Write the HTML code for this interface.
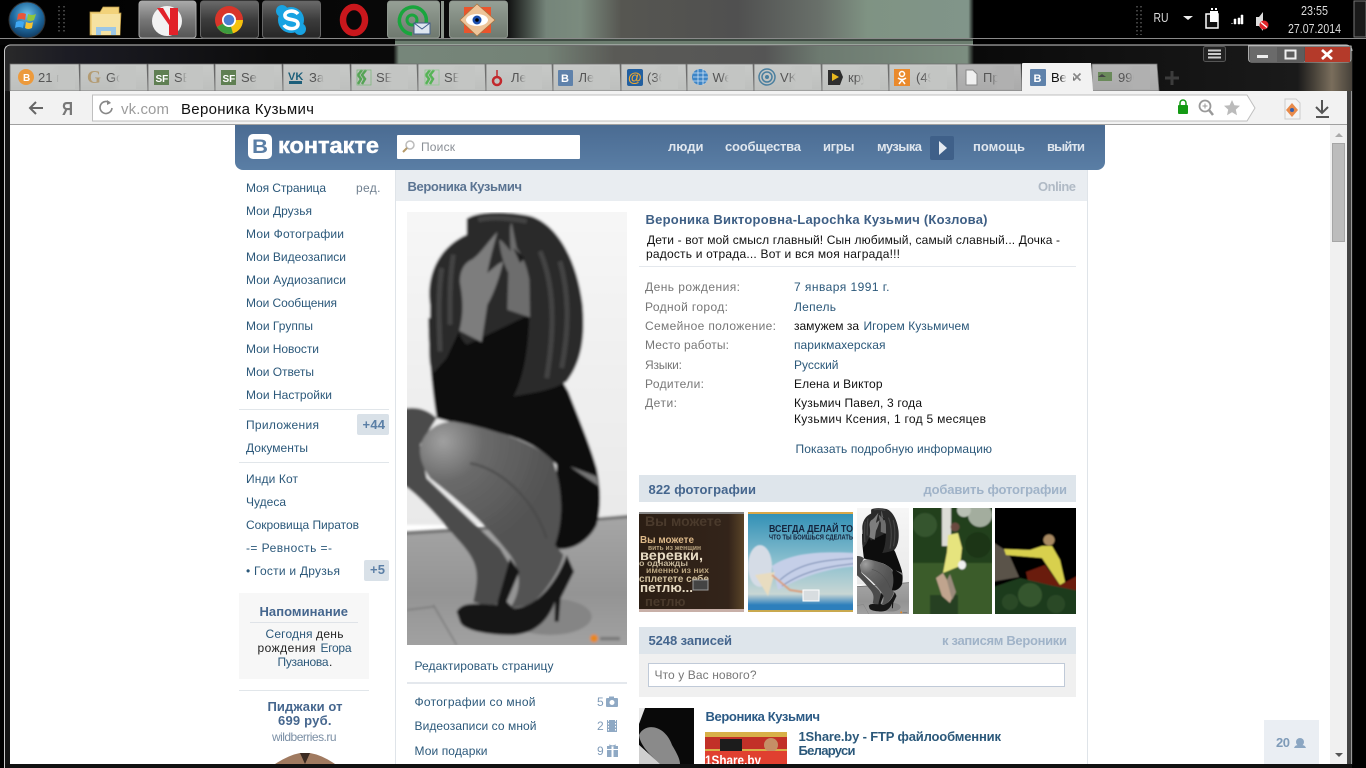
<!DOCTYPE html>
<html lang="ru"><head><meta charset="utf-8"><title>Вероника Кузьмич</title>
<style>
html,body{margin:0;padding:0;background:#000;width:1366px;height:768px;overflow:hidden}
svg{display:block}
text{font-family:"Liberation Sans","Noto Sans CJK SC",sans-serif;font-size:12px;fill:#2b587a}
.b{font-weight:bold;font-size:13px}
.g{fill:#777}.k{fill:#111}
.w{fill:#dfe6ee;font-weight:bold;font-size:13px}
.t{fill:#555;font-size:13px}
</style></head><body>
<svg width="1366" height="768" viewBox="0 0 1366 768" xmlns="http://www.w3.org/2000/svg">
<defs>
<filter id="s3" x="-10%" y="-10%" width="120%" height="120%"><feGaussianBlur stdDeviation="4"/></filter>
<filter id="s1" x="-5%" y="-5%" width="110%" height="110%"><feGaussianBlur stdDeviation=".7"/></filter>
<linearGradient id="wp" x1="0" x2="1366" y1="0" y2="0" gradientUnits="userSpaceOnUse">
<stop offset="0" stop-color="#000"/><stop offset=".37" stop-color="#0b0b0b"/><stop offset=".40" stop-color="#75857a"/><stop offset=".425" stop-color="#7b8b7e"/><stop offset=".455" stop-color="#565651"/><stop offset=".54" stop-color="#505050"/><stop offset=".6" stop-color="#69706a"/><stop offset=".635" stop-color="#7f9383"/><stop offset=".709" stop-color="#81958a"/><stop offset=".713" stop-color="#000"/><stop offset="1" stop-color="#000"/>
</linearGradient>
<linearGradient id="tb" x1="0" x2="1366" y1="0" y2="0" gradientUnits="userSpaceOnUse">
<stop offset="0" stop-color="#2a2a2a"/><stop offset=".05" stop-color="#1c1c24"/><stop offset=".2" stop-color="#0c0c0c"/><stop offset=".288" stop-color="#0a0a0a"/><stop offset=".292" stop-color="#76867a"/><stop offset=".4" stop-color="#748276"/><stop offset=".45" stop-color="#5a5a56"/><stop offset=".56" stop-color="#555"/><stop offset=".6" stop-color="#6d7a70"/><stop offset=".708" stop-color="#7c8e80"/><stop offset=".713" stop-color="#0a0a0a"/><stop offset=".95" stop-color="#1a1a1a"/><stop offset=".975" stop-color="#7a6e5c"/><stop offset="1" stop-color="#222"/>
</linearGradient>
<linearGradient id="btn" x1="0" x2="0" y1="0" y2="1"><stop offset="0" stop-color="#6a6a6a"/><stop offset=".5" stop-color="#3c3c3c"/><stop offset="1" stop-color="#262626"/></linearGradient>
<linearGradient id="btn2" x1="0" x2="0" y1="0" y2="1"><stop offset="0" stop-color="#aaa"/><stop offset=".5" stop-color="#777"/><stop offset="1" stop-color="#555"/></linearGradient>
<linearGradient id="btn3" x1="0" x2="0" y1="0" y2="1"><stop offset="0" stop-color="#96a096"/><stop offset="1" stop-color="#6e786e"/></linearGradient>
<linearGradient id="tab" x1="0" x2="0" y1="0" y2="1"><stop offset="0" stop-color="#c8cac8"/><stop offset="1" stop-color="#bdbfbd"/></linearGradient>
<linearGradient id="tabd" x1="0" x2="0" y1="0" y2="1"><stop offset="0" stop-color="#b6b6b6"/><stop offset="1" stop-color="#aaa"/></linearGradient>
<linearGradient id="fa"><stop offset="0" stop-color="#c3c5c3" stop-opacity="0"/><stop offset=".33" stop-color="#c3c5c3"/><stop offset="1" stop-color="#c3c5c3"/></linearGradient>
<linearGradient id="fd"><stop offset="0" stop-color="#b0b0b0" stop-opacity="0"/><stop offset=".33" stop-color="#b0b0b0"/><stop offset="1" stop-color="#b0b0b0"/></linearGradient>
<linearGradient id="fw"><stop offset="0" stop-color="#f2f2f2" stop-opacity="0"/><stop offset=".5" stop-color="#f2f2f2"/><stop offset="1" stop-color="#f2f2f2"/></linearGradient>
<linearGradient id="hd" x1="0" x2="0" y1="0" y2="1"><stop offset="0" stop-color="#4a6b92"/><stop offset="1" stop-color="#5a7ea5"/></linearGradient>
<radialGradient id="orb" cx=".5" cy=".35" r=".7"><stop offset="0" stop-color="#6fc0e8"/><stop offset=".55" stop-color="#1f6aa0"/><stop offset="1" stop-color="#0c2f52"/></radialGradient>
<linearGradient id="wall" x1="0" x2="0" y1="0" y2="1"><stop offset="0" stop-color="#f7f7f7"/><stop offset="1" stop-color="#e9e9e9"/></linearGradient>
<linearGradient id="floor" x1="0" x2="0" y1="0" y2="1"><stop offset="0" stop-color="#a6a6a6"/><stop offset=".5" stop-color="#949494"/><stop offset="1" stop-color="#a8a8a8"/></linearGradient>
<radialGradient id="knee" gradientUnits="userSpaceOnUse" cx="130" cy="710" r="340"><stop offset="0" stop-color="#a0a0a0"/><stop offset=".35" stop-color="#6a6a6a"/><stop offset="1" stop-color="#525252"/></radialGradient>
<linearGradient id="sky" x1="0" x2="0" y1="0" y2="1"><stop offset="0" stop-color="#2f8fb5"/><stop offset=".5" stop-color="#8cc0cf"/><stop offset=".82" stop-color="#c8d6d4"/><stop offset=".93" stop-color="#2d7fbc"/><stop offset="1" stop-color="#2d7fbc"/></linearGradient>
<linearGradient id="bark" x1="0" x2="1" y1="0" y2="0"><stop offset="0" stop-color="#2b1e14"/><stop offset=".85" stop-color="#33241a"/><stop offset="1" stop-color="#5a4428"/></linearGradient>
<clipPath id="cT1"><rect x="639" y="512" width="105" height="100"/></clipPath>
<clipPath id="cT2"><rect x="748" y="512" width="105" height="100"/></clipPath>
<clipPath id="cT4"><rect x="913" y="508" width="79" height="106"/></clipPath>
<clipPath id="cT5"><rect x="995" y="508" width="81" height="106"/></clipPath>
<clipPath id="cAv"><rect x="639" y="708" width="55" height="56"/></clipPath>
<clipPath id="cShare"><rect x="705" y="732" width="82" height="32"/></clipPath>
<clipPath id="cP"><rect x="21" y="22" width="660" height="1298"/></clipPath>
<symbol id="woman" viewBox="21 22 660 1298" preserveAspectRatio="none" overflow="hidden">
<g clip-path="url(#cP)">
<g filter="url(#s3)">
<rect x="-40" y="-40" width="780" height="1000" fill="url(#wall)"/>
<path d="M-40,988 L300,968 L740,930 L740,1400 L-40,1400 Z" fill="url(#floor)"/>
<path d="M-40,988 L300,968 L740,930" stroke="#707070" stroke-width="10" fill="none"/>
<path d="M100,1200 L170,1320 M21,1215 L100,1205" stroke="#666" stroke-width="3" fill="none"/>
<ellipse cx="450" cy="1235" rx="125" ry="55" fill="#858585"/>
<path d="M85,340 L178,340 L390,300 C430,420 480,520 505,560 C540,650 570,720 590,790 C602,850 605,900 590,960 C560,1020 500,1040 465,1030 L470,780 C380,680 250,680 110,640 C100,580 85,450 85,340 Z" fill="#090909"/>
<path d="M200,42 C240,15 340,22 395,35 C470,60 530,160 548,300 C556,400 545,470 500,530 C450,560 390,565 340,575 C370,520 385,440 388,330 L200,420 C180,400 178,385 178,378 L140,460 L100,505 C78,480 92,380 90,300 C78,220 110,130 200,90 Z" fill="#2b2b2b"/>
<path d="M420,140 C455,220 470,340 440,520 M480,170 C505,260 510,360 485,490 M125,190 C112,280 118,360 120,440 M160,150 C148,230 150,280 150,360 M235,45 C280,35 330,40 380,50" stroke="#454545" stroke-width="14" fill="none"/>
<path d="M178,378 L245,412 L262,300 C285,260 300,210 310,170 L295,178 L262,205 C270,160 285,110 292,82 C265,110 240,150 215,165 C190,175 178,205 180,235 C190,290 190,330 178,378 Z" fill="#7d7d7d"/>
<path d="M298,105 C300,130 305,165 325,205 L322,315 L390,338 L388,225 C380,180 365,150 350,130 L335,55 C328,60 330,90 332,140 C320,125 305,105 298,105 Z" fill="#6d6d6d"/>
<path d="M340,130 L375,160 L360,175 Z" fill="#1c1c1c"/>
<path d="M21,610 C60,605 90,620 110,640 L60,720 L80,820 L300,1030 L330,1080 C320,1120 300,1190 280,1210 L220,1190 C240,1100 235,1070 170,1000 C100,920 50,860 -20,820 L-20,610 Z" fill="#4c4c4c"/>
<path d="M60,730 C70,680 110,650 160,650 C280,670 420,720 460,770 C490,860 490,950 465,1020 L490,1050 C480,1100 430,1170 390,1200 L330,1210 C370,1150 360,1090 330,1050 C260,960 180,890 90,820 C70,790 58,760 60,730 Z" fill="url(#knee)"/>
<path d="M210,775 C300,790 400,880 440,1000" stroke="#484848" stroke-width="6" fill="none"/>
<path d="M510,785 L590,815 L598,845 Z" fill="#777"/>
<path d="M170,1220 C190,1185 240,1200 290,1200 L330,1060 L358,1100 L320,1190 L340,1210 C420,1210 480,1110 500,1050 L522,1100 L482,1180 L476,1250 L464,1250 L465,1190 C440,1260 390,1290 330,1290 C280,1290 190,1280 180,1250 Z" fill="#141414"/>
<circle cx="582" cy="1300" r="12" fill="#e8871e"/><rect x="600" y="1296" width="60" height="10" fill="#777"/>
</g>
</g>
</symbol>
</defs>

<!-- desktop -->
<rect width="1366" height="768" fill="#000"/>
<rect x="395" y="38" width="578" height="8" fill="#7f9383" opacity=".85"/>
<!-- taskbar -->
<rect width="1366" height="38" fill="url(#wp)"/>
<rect y="38" width="1366" height="1" fill="#8a8a8a"/>
<rect y="39" width="395" height="6" fill="#050505"/>
<rect x="395" y="39" width="578" height="2" fill="#3e4a42"/>
<rect x="973" y="39" width="393" height="6" fill="#000"/>

<circle cx="27" cy="20" r="18" fill="url(#orb)" stroke="#333"/>
<path d="M18,14 q4,-2 8,0 l-1,6 q-4,-2 -8,0 z" fill="#e9563a"/>
<path d="M28,14 q4,2 8,0 l-2,6 q-4,2 -7,0 z" fill="#8ec63f"/>
<path d="M16,22 q4,-2 8,0 l-1,6 q-4,-2 -8,0 z" fill="#3fa9f5"/>
<path d="M26,22 q4,2 7,0 l-1,6 q-4,2 -7,0 z" fill="#f7c331"/>
<path d="M59,6 V33 M64,6 V33" stroke="#555" stroke-width="1.5" stroke-dasharray="1.5 2.5"/>
<!-- folder -->
<path d="M90,12 h10 l3,-5 h16 v6 h2 l-1,22 h-30 z" fill="#f2d27a" stroke="#b79544" stroke-width=".7"/>
<rect x="92" y="14" width="28" height="21" fill="#f6e2a2"/>
<path d="M96,35 v-8 h20 v8 h-5 v-4 h-10 v4 z" fill="#9cc7e6"/>
<!-- buttons -->
<rect x="139" y="1" width="57" height="37" rx="3" fill="url(#btn2)" stroke="#aaa"/>
<circle cx="167" cy="21" r="15" fill="#f2f2f2"/>
<path d="M157,8 L163,8 L170,20 L170,8 L178,8 L178,35 L169,35 L169,25 Z" fill="#e2222a"/>
<rect x="200.500" y="1" width="58" height="37" rx="3" fill="url(#btn)" stroke="#666"/>
<circle cx="229" cy="20" r="14" fill="#d9352a"/>
<path d="M229,20 L217,27 A14,14 0 0 0 229,34 A14,14 0 0 0 243,20 Z" fill="#f4c20d"/>
<path d="M229,20 L217,27 A14,14 0 0 0 233,33.500 Z" fill="#3c9b3e"/>
<circle cx="229" cy="20" r="7" fill="#fff"/><circle cx="229" cy="20" r="5.300" fill="#4a7fd0"/>
<rect x="262.500" y="1" width="58" height="37" rx="3" fill="url(#btn)" stroke="#666"/>
<circle cx="291" cy="20" r="13" fill="#18a3e2"/><circle cx="282" cy="11" r="6" fill="#18a3e2"/><circle cx="300" cy="29" r="6" fill="#18a3e2"/>
<path d="M298,14 C294,9 284,11 285,16 C286,21 298,18 298,24 C298,30 287,30 284,25" stroke="#fff" stroke-width="3.600" fill="none"/>
<ellipse cx="354" cy="20" rx="11" ry="13" fill="none" stroke="#c9171c" stroke-width="6.500"/>
<rect x="387.500" y="1" width="52" height="37" rx="3" fill="url(#btn3)" stroke="#8e968e"/>
<path d="M412,34 a13.500,13.500 0 1 1 8,-2" fill="none" stroke="#19a53d" stroke-width="3.500"/>
<circle cx="412" cy="20" r="5" fill="none" stroke="#19a53d" stroke-width="3"/>
<rect x="414" y="23" width="16" height="11" fill="#dde6f0" stroke="#44608a"/><path d="M414,23 L422,29 L430,23" fill="none" stroke="#44608a"/>
<rect x="441" y="1" width="3" height="37" fill="#8d968d"/>
<rect x="449.500" y="1" width="58" height="37" rx="3" fill="url(#btn3)" stroke="#8e968e"/>
<rect x="464" y="7" width="27" height="26" fill="#e9552d"/>
<path d="M477,4 L495,20 L477,36 L460,20 Z" fill="#eec59a" stroke="#a9733f" stroke-width=".7"/>
<ellipse cx="477" cy="20" rx="11" ry="6" fill="#fff"/><circle cx="477" cy="20" r="4.500" fill="#1c4fae"/><circle cx="477" cy="20" r="1.800" fill="#000"/>
<!-- tray -->
<path d="M1137,6 V35 M1141,6 V35" stroke="#555" stroke-width="1.500" stroke-dasharray="1.500 2.500"/>
<text x="1153.500" y="22" style="fill:#ddd;font-size:13px" textLength="15" lengthAdjust="spacingAndGlyphs">RU</text>
<path d="M1183,16 h10 l-5,4 z" fill="#eee"/>
<path d="M1206,14 h12 v14 h-12 z" fill="#111" stroke="#fff" stroke-width="1.500"/><path d="M1210,11 h8 v11 h-8 z" fill="#fff"/><path d="M1212,10 v-2 M1216,10 v-2" stroke="#fff" stroke-width="2"/>
<path d="M1231,23.500 h2 M1234,21 v3 h2 v-5 h-2 z M1238,18 h2 v6 h-2 z M1241,15 h2 v9 h-2 z" fill="#fff" stroke="#fff" stroke-width=".5"/>
<path d="M1256,17 h3 l4,-5 v19 l-4,-5 h-3 z" fill="#ddd"/><circle cx="1264" cy="25" r="4.500" fill="#e0242a"/><path d="M1261,22.500 L1267,27.500" stroke="#fff" stroke-width="1.200"/>
<text x="1301" y="15" style="fill:#ddd;font-size:13px" textLength="27" lengthAdjust="spacingAndGlyphs">23:55</text>
<text x="1288" y="33" style="fill:#ddd;font-size:13px" textLength="53" lengthAdjust="spacingAndGlyphs">27.07.2014</text>
<rect x="1354" y="1" width="12" height="36" fill="#1a1a1a" stroke="#777"/>

<!-- window frame -->
<rect x="4" y="45" width="1349" height="723" rx="6" fill="#141414"/>
<rect x="5" y="46" width="1347" height="45" fill="url(#tb)"/>
<path d="M4.500,768 V51 a6,6 0 0 1 6,-6 H1346 a6,6 0 0 1 6,6" fill="none" stroke="#c9c9c9"/>
<rect x="1347" y="91" width="5" height="673" fill="#444"/>
<rect x="1351" y="91" width="1" height="677" fill="#999"/>
<rect x="5" y="764" width="1347" height="4" fill="#111"/>
<!-- title buttons -->
<rect x="1203.500" y="46.500" width="22" height="15" rx="2" fill="#222" stroke="#555"/>
<path d="M1208,50.500 h13 M1208,54 h13 M1208,57.500 h13" stroke="#ccc" stroke-width="2"/>
<path d="M1248.500,46 V59 a3,3 0 0 0 3,3 H1348 a3,3 0 0 0 3,-3 V46 Z" fill="#555" stroke="#aaa"/>
<rect x="1250" y="47" width="27" height="15" fill="#6a6a6a"/>
<rect x="1277" y="47" width="27" height="15" fill="#5d5d5d"/>
<rect x="1305" y="47" width="45" height="15" fill="#b43a2a"/>
<rect x="1257" y="55" width="11" height="3" fill="#eee"/>
<rect x="1285.500" y="50.500" width="10" height="8" fill="none" stroke="#eee" stroke-width="2"/>
<path d="M1322,50 L1332,59 M1332,50 L1322,59" stroke="#fff" stroke-width="2.800"/>

<!-- tabs -->
<g stroke="#6e6e6e" stroke-width=".8">
<path d="M10,91 V64 H79 L80,91Z" fill="url(#tab)"/>
<path d="M80,91 V64 H147 L148,91Z" fill="url(#tab)"/>
<path d="M148,91 V64 H214 L215,91Z" fill="url(#tab)"/>
<path d="M215,91 V64 H282 L283,91Z" fill="url(#tab)"/>
<path d="M283,91 V64 H350 L351,91Z" fill="url(#tab)"/>
<path d="M351,91 V64 H417 L418,91Z" fill="url(#tab)"/>
<path d="M418,91 V64 H485 L486,91Z" fill="url(#tab)"/>
<path d="M486,91 V64 H552 L553,91Z" fill="url(#tab)"/>
<path d="M553,91 V64 H620 L621,91Z" fill="url(#tab)"/>
<path d="M621,91 V64 H686 L687,91Z" fill="url(#tab)"/>
<path d="M687,91 V64 H753 L754,91Z" fill="url(#tab)"/>
<path d="M754,91 V64 H821 L822,91Z" fill="url(#tab)"/>
<path d="M822,91 V64 H888 L889,91Z" fill="url(#tab)"/>
<path d="M889,91 V64 H956 L957,91Z" fill="url(#tab)"/>
<path d="M957,91 V64 H1021 L1022,91Z" fill="url(#tabd)"/>
<path d="M1092,91 V64 H1157 L1159,91Z" fill="url(#tabd)"/>
</g>
<path d="M1022,91 V64 Q1022,63 1023,63 H1091 L1093,91Z" fill="#f2f2f2"/>
<path d="M1172,71 v14 M1165,78 h14" stroke="#3c3c3c" stroke-width="3"/>
<!-- favicons and tab titles -->
<circle cx="26" cy="77" r="8" fill="#ec9a3c"/><text x="23" y="81" style="fill:#fff;font-size:10px;font-weight:bold">B</text>
<text x="38" y="82" class="t">21 г</text><rect x="51" y="66" width="24" height="23" fill="url(#fa)"/>
<text x="87" y="83" style="fill:#b39b72;font-family:'Liberation Serif',serif;font-size:18px;font-weight:bold">G</text>
<text x="106" y="82" class="t">Go</text><rect x="112" y="66" width="24" height="23" fill="url(#fa)"/>
<rect x="154" y="70" width="15" height="15" fill="#5f7f52"/><text x="155.500" y="82" style="fill:#fff;font-size:10px;font-weight:bold">SF</text>
<text x="174" y="82" class="t">SEO</text><rect x="179" y="66" width="24" height="23" fill="url(#fa)"/>
<rect x="221" y="70" width="15" height="15" fill="#5f7f52"/><text x="222.500" y="82" style="fill:#fff;font-size:10px;font-weight:bold">SF</text>
<text x="241" y="82" class="t">Sec</text><rect x="250" y="66" width="24" height="23" fill="url(#fa)"/>
<text x="288" y="80" style="fill:#1d5f7a;font-size:11px;font-weight:bold">VK</text><rect x="289" y="81" width="13" height="3" fill="#1d5f7a"/>
<text x="309" y="82" class="t">За</text><rect x="316" y="66" width="24" height="23" fill="url(#fa)"/>
<path d="M362,70 l-4,5 3,4 -3,5 M366,70 l-4,5 3,4 -3,5" stroke="#56a456" stroke-width="2.500" fill="none"/><rect x="357" y="70" width="14" height="15" fill="none" stroke="#7fb87f" stroke-width=".8"/>
<text x="376" y="82" class="t">SEO</text><rect x="384" y="66" width="24" height="23" fill="url(#fa)"/>
<path d="M430,70 l-4,5 3,4 -3,5 M434,70 l-4,5 3,4 -3,5" stroke="#56b456" stroke-width="2.500" fill="none"/><rect x="425" y="70" width="14" height="15" fill="none" stroke="#8fc88f" stroke-width=".8"/>
<text x="444" y="82" class="t">SEO</text><rect x="451" y="66" width="24" height="23" fill="url(#fa)"/>
<path d="M497,70 v8" stroke="#c2282c" stroke-width="1.500"/><circle cx="497" cy="81" r="4" fill="none" stroke="#c2282c" stroke-width="2.500"/>
<text x="511" y="82" class="t">Ле</text><rect x="518" y="66" width="24" height="23" fill="url(#fa)"/>
<rect x="558" y="70" width="15" height="16" rx="1" fill="#5f82ab"/><text x="561" y="82" style="fill:#fff;font-size:11px;font-weight:bold">B</text>
<text x="578.500" y="82" class="t">Ле</text><rect x="586" y="66" width="24" height="23" fill="url(#fa)"/>
<rect x="627" y="69" width="16" height="17" rx="2" fill="#225f9f"/><text x="628" y="82" style="fill:#f0a830;font-size:14px;font-weight:bold">@</text>
<text x="647" y="82" class="t">(36</text><rect x="654" y="66" width="24" height="23" fill="url(#fa)"/>
<circle cx="700" cy="77" r="8" fill="#3d85c6"/><path d="M693,73 h14 M693,77 h15 M693,81 h14 M698,69 v16 M703,69 v16" stroke="#cfe3f5" stroke-width=".8"/>
<text x="712.500" y="82" class="t">We</text><rect x="721" y="66" width="24" height="23" fill="url(#fa)"/>
<circle cx="767" cy="77" r="8" fill="none" stroke="#4a7f9f" stroke-width="1.500"/><circle cx="767" cy="77" r="5" fill="none" stroke="#4a7f9f" stroke-width="1.500"/><circle cx="767" cy="77" r="2" fill="#4a7f9f"/>
<text x="780" y="82" class="t">VK</text><rect x="788" y="66" width="24" height="23" fill="url(#fa)"/>
<path d="M828,70 h12 l3,7 -3,8 h-12 z" fill="#2d2d2d"/><path d="M832,73 l7,4 -7,4 z" fill="#e8b81f"/>
<text x="848" y="82" class="t">кру</text><rect x="856" y="66" width="24" height="23" fill="url(#fa)"/>
<rect x="894" y="69" width="16" height="17" fill="#ea8a2c"/><circle cx="902" cy="74" r="2.500" fill="none" stroke="#fff" stroke-width="1.500"/><path d="M898,78 q4,3 8,0 M902,80 l-3,4 M902,80 l3,4" stroke="#fff" stroke-width="1.500" fill="none"/>
<text x="916" y="82" class="t">(49</text><rect x="923" y="66" width="24" height="23" fill="url(#fa)"/>
<path d="M966,70 h7 l4,4 v11 h-11 z" fill="#f0f0f0" stroke="#888"/>
<text x="983" y="82" class="t">Пр</text><rect x="990" y="66" width="24" height="23" fill="url(#fd)"/>
<rect x="1030" y="69" width="16" height="17" rx="1" fill="#5f82ab"/><text x="1033.500" y="82" style="fill:#fff;font-size:11px;font-weight:bold">B</text>
<text x="1051" y="82" class="k" style="font-size:13px">Вер</text><rect x="1060" y="66" width="13" height="23" fill="url(#fw)"/>
<path d="M1073.500,73.500 l7,7 M1080.500,73.500 l-7,7" stroke="#888" stroke-width="1.700"/>
<rect x="1098" y="72" width="14" height="9" fill="#6a8a5a"/><path d="M1098,77 l4,-3 4,3" fill="#444"/>
<text x="1118" y="82" class="t">990</text><rect x="1126" y="66" width="24" height="23" fill="url(#fd)"/>

<!-- toolbar -->
<rect x="10" y="91" width="1337" height="34" fill="#f2f2f2"/>
<rect x="10" y="124" width="1337" height="1" fill="#a0a0a0"/>
<path d="M43,108 H30 M36,102 l-6,6 6,6" stroke="#666" stroke-width="2" fill="none"/>
<text x="62" y="115" style="fill:#777;font-size:18px;font-weight:bold" textLength="11" lengthAdjust="spacingAndGlyphs">Я</text>
<path d="M92.500,95 H1247 L1255,108 L1247,121 H92.500 Z" fill="#fff" stroke="#bfbfbf"/>
<path d="M110,103 a6,6 0 1 0 2,5" fill="none" stroke="#888" stroke-width="1.600"/><path d="M107,100 l4,3 -4,2 z" fill="#888"/>
<text x="121" y="114" style="fill:#9c9c9c;font-size:15px" textLength="48">vk.com</text>
<text x="181" y="114" class="k" style="font-size:15px" textLength="133">Вероника Кузьмич</text>
<rect x="1178" y="105" width="10" height="9" rx="1" fill="#149a14"/><path d="M1180,105 v-2 a3,3 0 0 1 6,0 v2" fill="none" stroke="#149a14" stroke-width="1.500"/>
<circle cx="1205" cy="106" r="5.500" fill="none" stroke="#999" stroke-width="1.800"/><path d="M1209,110 l4,5" stroke="#999" stroke-width="2.500"/><path d="M1202.500,106 h5 M1205,103.500 v5" stroke="#999"/>
<path d="M1232,100 l2.400,5.200 5.600,.6 -4.200,3.800 1.200,5.600 -5,-2.900 -5,2.900 1.200,-5.600 -4.200,-3.800 5.600,-.6 z" fill="#bbb"/>
<path d="M1285,99 h11 l4,4 v16 h-15 z" fill="#f4f4f4" stroke="#ccc"/><path d="M1292,103 l6,7 -6,7 -6,-7 z" fill="#e88a4a"/><circle cx="1292" cy="110" r="2" fill="#335fae"/>
<path d="M1322,100 v13 M1316,107 l6,6 6,-6" stroke="#555" stroke-width="2" fill="none"/><rect x="1316" y="116" width="13" height="2" fill="#555"/>

<!-- page -->
<rect x="10" y="125" width="1337" height="639" fill="#fff"/>
<!-- scrollbar -->
<rect x="1330" y="125" width="17" height="639" fill="#f0f0f0"/>
<path d="M1335,137 h8 l-4,-4 z" fill="#aaa"/>
<rect x="1332.500" y="143.500" width="12" height="98" fill="#bcbcbc" stroke="#a6a6a6"/>
<path d="M1335,753 h8 l-4,4 z" fill="#555"/>

<!-- vk header -->
<path d="M235,125 H1105 V162 a8,8 0 0 1 -8,8 H243 a8,8 0 0 1 -8,-8 Z" fill="url(#hd)"/>
<rect x="248" y="134" width="24" height="25" rx="5" fill="#fff"/>
<text x="252" y="153" style="fill:#5a7ea5;font-size:19px;font-weight:bold" textLength="16" lengthAdjust="spacingAndGlyphs">В</text>
<text x="278" y="153" style="fill:#fff;stroke:#fff;stroke-width:.5;font-size:22px;font-weight:bold" textLength="101" lengthAdjust="spacingAndGlyphs">контакте</text>
<rect x="397" y="135" width="183" height="24" rx="1" fill="#fff"/>
<circle cx="410" cy="145" r="4" fill="none" stroke="#bbb" stroke-width="1.500"/><path d="M407,148 l-4,4" stroke="#b59a6a" stroke-width="2"/>
<text x="421" y="151" style="fill:#8a8f96" textLength="34">Поиск</text>
<text x="668" y="151" class="w" textLength="35.500">люди</text>
<text x="725" y="151" class="w" textLength="76">сообщества</text>
<text x="823" y="151" class="w" textLength="31.500">игры</text>
<text x="877" y="151" class="w" textLength="45">музыка</text>
<rect x="930" y="136" width="24" height="24" rx="2" fill="#3f6089"/>
<path d="M939,141 L947,148 L939,155 Z" fill="#e4eaf1"/>
<text x="973" y="151" class="w" textLength="52">помощь</text>
<text x="1047" y="151" class="w" textLength="38">выйти</text>

<!-- left nav -->
<text x="246" y="192" textLength="80">Моя Страница</text>
<text x="356" y="192" style="fill:#6f7f8f" textLength="24.500">ред.</text>
<text x="246" y="215" textLength="66">Мои Друзья</text>
<text x="246" y="238" textLength="98">Мои Фотографии</text>
<text x="246" y="261" textLength="100">Мои Видеозаписи</text>
<text x="246" y="284" textLength="100">Мои Аудиозаписи</text>
<text x="246" y="307" textLength="91">Мои Сообщения</text>
<text x="246" y="330" textLength="67">Мои Группы</text>
<text x="246" y="353" textLength="73">Мои Новости</text>
<text x="246" y="376" textLength="68">Мои Ответы</text>
<text x="246" y="399" textLength="86">Мои Настройки</text>
<rect x="239" y="409" width="150" height="1" fill="#e1e6ea"/>
<text x="246" y="429" textLength="73">Приложения</text>
<rect x="357" y="414" width="32" height="21" rx="2" fill="#d9e1e8"/>
<text x="362.500" y="429" class="b" style="fill:#5b7fa6" textLength="22.500">+44</text>
<text x="246" y="452" textLength="62">Документы</text>
<rect x="239" y="462" width="150" height="1" fill="#e1e6ea"/>
<text x="246" y="483" textLength="52">Инди Кот</text>
<text x="246" y="506" textLength="40">Чудеса</text>
<text x="246" y="529" textLength="113">Сокровища Пиратов</text>
<text x="246" y="552" textLength="86">-= Ревность =-</text>
<text x="246" y="575" textLength="94">• Гости и Друзья</text>
<rect x="364" y="560" width="25" height="21" rx="2" fill="#d9e1e8"/>
<text x="370" y="574" class="b" style="fill:#5b7fa6" textLength="15">+5</text>
<!-- reminder -->
<rect x="239" y="593" width="130" height="86" fill="#f7f7f7"/>
<text x="259.500" y="616" class="b" style="fill:#45668e" textLength="88.500">Напоминание</text>
<rect x="250" y="622" width="108" height="1" fill="#dfe3e8"/>
<text x="265.500" y="638" textLength="47">Сегодня</text><text x="316" y="638" style="fill:#222" textLength="27.500">день</text>
<text x="257.500" y="652" style="fill:#222" textLength="58">рождения</text><text x="320.500" y="652" textLength="31">Егора</text>
<text x="277.500" y="666" textLength="51">Пузанова</text><text x="329" y="666" style="fill:#222">.</text>
<rect x="239" y="690" width="130" height="1" fill="#e1e6ea"/>
<text x="267.500" y="711" class="b" style="fill:#45668e" textLength="75">Пиджаки от</text>
<text x="278" y="725" class="b" style="fill:#45668e" textLength="53.500">699 руб.</text>
<text x="272" y="741" style="fill:#7b8fa5" textLength="64.500">wildberries.ru</text>
<path d="M275,764 q14,-9 25,-11 h10 q12,2 25,11 z" fill="#a07a60"/><path d="M300,753 l5,11 5,-11" fill="#3a2a22"/>

<!-- main col -->
<rect x="395" y="170" width="1" height="594" fill="#dfe4e9"/>
<rect x="1087" y="170" width="1" height="594" fill="#dfe4e9"/>
<rect x="396" y="170" width="691" height="31" fill="#e9edf1"/>
<text x="407.500" y="191" class="b" style="fill:#5b7492" textLength="114.500">Вероника Кузьмич</text>
<text x="1038" y="191" class="b" style="fill:#b0bac5" textLength="38">Online</text>
<!-- photo -->
<use href="#woman" x="407" y="212" width="220" height="433"/>
<text x="414.500" y="670" textLength="139">Редактировать страницу</text>
<rect x="407" y="682" width="220" height="2" fill="#e4e8ed"/>
<text x="414.500" y="706" textLength="121">Фотографии со мной</text>
<text x="597" y="706" style="fill:#7f9bb8">5</text>
<rect x="606" y="698" width="12" height="9" rx="1" fill="#8fa9c4"/><circle cx="612" cy="702.500" r="2.500" fill="#fff"/><rect x="609" y="696.500" width="5" height="2" fill="#8fa9c4"/>
<text x="414.500" y="730" textLength="122">Видеозаписи со мной</text>
<text x="597" y="730" style="fill:#7f9bb8">2</text>
<rect x="607" y="720" width="10" height="12" fill="#8fa9c4"/><path d="M608.500,720 v12 M615.500,720 v12" stroke="#fff" stroke-dasharray="1.500 1.500"/>
<text x="414.500" y="755" textLength="73">Мои подарки</text>
<text x="597" y="755" style="fill:#7f9bb8">9</text>
<rect x="607" y="750" width="11" height="7" fill="#8fa9c4"/><rect x="607" y="746" width="11" height="3" fill="#8fa9c4"/><rect x="611.500" y="746" width="2" height="11" fill="#fff"/><path d="M609,745 l3.500,1 3.500,-1" stroke="#8fa9c4" fill="none"/>

<!-- profile -->
<text x="645.500" y="224" class="b" style="fill:#3e5f85" textLength="342">Вероника Викторовна-Lapochka Кузьмич (Козлова)</text>
<text x="647" y="244" class="k" textLength="413">Дети - вот мой смысл главный! Сын любимый, самый славный... Дочка -</text>
<text x="646" y="258" class="k" textLength="254">радость и отрада... Вот и вся моя награда!!!</text>
<rect x="639" y="266" width="437" height="1" fill="#e4e8ed"/>
<text x="645" y="291" class="g" textLength="95">День рождения:</text>
<text x="794" y="291" textLength="95.500">7 января 1991 г.</text>
<text x="645" y="311" class="g" textLength="83">Родной город:</text>
<text x="794" y="311" textLength="42">Лепель</text>
<text x="645" y="330" class="g" textLength="131">Семейное положение:</text>
<text x="794" y="330" class="k" textLength="65">замужем за</text>
<text x="863.500" y="330" textLength="106">Игорем Кузьмичем</text>
<text x="645" y="349" class="g" textLength="84">Место работы:</text>
<text x="794" y="349" textLength="91.500">парикмахерская</text>
<text x="645" y="369" class="g" textLength="37">Языки:</text>
<text x="794" y="369" textLength="44.500">Русский</text>
<text x="645" y="388" class="g" textLength="59">Родители:</text>
<text x="794" y="388" class="k" textLength="88.500">Елена и Виктор</text>
<text x="645" y="407" class="g" textLength="32">Дети:</text>
<text x="794" y="407" class="k" textLength="128">Кузьмич Павел, 3 года</text>
<text x="794" y="423" class="k" textLength="192">Кузьмич Ксения, 1 год 5 месяцев</text>
<text x="795.500" y="453" textLength="196.500">Показать подробную информацию</text>

<!-- photos bar -->
<rect x="639" y="475" width="437" height="27" fill="#dee5eb"/>
<text x="648.500" y="494" class="b" style="fill:#45668e" textLength="107.500">822 фотографии</text>
<text x="923.500" y="494" class="b" style="fill:#a0b3c8" textLength="143.500">добавить фотографии</text>

<!-- thumb 1 -->
<g clip-path="url(#cT1)">
<rect x="639" y="512" width="105" height="100" fill="url(#bark)"/>
<rect x="639" y="512" width="105" height="2" fill="#888"/>
<rect x="639" y="609" width="105" height="3" fill="#c8b0a8"/>
<text x="645" y="526" style="fill:#4a3a2c;font-size:14px;font-weight:bold">Вы можете</text>
<text x="640" y="543" style="fill:#dcb888;font-size:10px;font-weight:bold" textLength="54" lengthAdjust="spacingAndGlyphs">Вы можете</text>
<text x="648" y="550" style="fill:#b9a47f;font-size:7.500px;font-weight:bold" textLength="53" lengthAdjust="spacingAndGlyphs">вить из женщин</text>
<text x="640" y="560" style="fill:#e8dcc4;font-size:14px;font-weight:bold" textLength="63" lengthAdjust="spacingAndGlyphs">веревки,</text>
<text x="639" y="566" style="fill:#c5b69a;font-size:8px;font-weight:bold" textLength="49" lengthAdjust="spacingAndGlyphs">о однажды</text>
<text x="646" y="573" style="fill:#b9a47f;font-size:8px;font-weight:bold" textLength="63" lengthAdjust="spacingAndGlyphs">именно из них</text>
<text x="639" y="582" style="fill:#d2c19e;font-size:10px;font-weight:bold" textLength="70" lengthAdjust="spacingAndGlyphs">сплетете себе</text>
<text x="640" y="592" style="fill:#e8dcc4;font-size:13px;font-weight:bold" textLength="53" lengthAdjust="spacingAndGlyphs">петлю...</text>
<text x="645" y="606" style="fill:#4a3a2c;font-size:13px;font-weight:bold">петлю</text>
<rect x="693" y="580" width="15" height="10" fill="#444" stroke="#999"/>
</g>
<!-- thumb 2 -->
<g clip-path="url(#cT2)">
<rect x="748" y="512" width="105" height="100" fill="url(#sky)"/>
<rect x="748" y="512" width="105" height="2" fill="#d9a84a"/><rect x="748" y="610" width="105" height="2" fill="#c9a94f"/>
<g filter="url(#s1)">
<path d="M772,566 C795,550 830,552 860,553 V566 C825,568 800,578 778,590 Z" fill="#c5cfe8"/>
<path d="M780,580 C800,562 825,560 860,558 M782,586 C805,570 830,566 860,563" stroke="#7488b0" fill="none"/>
<ellipse cx="760" cy="566" rx="12" ry="21" fill="#d5dce6"/>
<path d="M755,575 L768,596 L775,572 Z" fill="#e8dcc0"/>
<path d="M772,575 L790,590 L803,592" stroke="#d9a080" stroke-width="2" fill="none"/>
</g>
<text x="769" y="532" style="fill:#14243d;font-size:10px;font-weight:bold" textLength="84" lengthAdjust="spacingAndGlyphs">ВСЕГДА ДЕЛАЙ ТО</text>
<text x="769" y="539.500" style="fill:#14243d;font-size:7px;font-weight:bold" textLength="84" lengthAdjust="spacingAndGlyphs">ЧТО ТЫ БОИШЬСЯ СДЕЛАТЬ</text>
<rect x="803" y="590" width="16" height="11" fill="#d8dde0" stroke="#fff"/>
</g>
<!-- thumb 3 -->
<use href="#woman" x="857" y="508" width="52" height="106"/>
<!-- thumb 4 -->
<g clip-path="url(#cT4)">
<g filter="url(#s1)">
<rect x="905" y="500" width="95" height="120" fill="#24401f"/>
<rect x="905" y="563" width="95" height="60" fill="#3a5c2c"/>
<circle cx="925" cy="525" r="12" fill="#34542e"/><circle cx="978" cy="545" r="13" fill="#1d3519"/>
<circle cx="980" cy="515" r="12" fill="#a3ad9e"/><circle cx="964" cy="510" r="7" fill="#b9c0b4"/>
<rect x="942" y="500" width="9" height="46" fill="#dcdcd6"/>
<rect x="930" y="595" width="28" height="25" fill="#263f20"/>
<circle cx="955" cy="527" r="4.500" fill="#6a4a40"/>
<path d="M948,535 L958,533 L962,548 L960,566 L943,573 L947,552 Z" fill="#e6e47e"/>
<path d="M943,573 L936,578 L942,596 L950,603 L952,598 L947,580 Z" fill="#c0a48e"/>
<path d="M950,574 L956,592 L952,600 L947,580 Z" fill="#9a8a7a"/>
<ellipse cx="962" cy="565" rx="4" ry="4.500" fill="#f0f0f0"/>
</g>
</g>
<!-- thumb 5 -->
<g clip-path="url(#cT5)">
<g filter="url(#s1)">
<rect x="985" y="500" width="100" height="120" fill="#040404"/>
<path d="M985,537 L1008,552 L1019,577 L985,583 Z" fill="#5a5248"/>
<path d="M1004,549 L1030,550 L1042,546 L1052,546 L1060,560 L1065,582 L1060,585 L1050,570 L1042,558 L1006,555 Z" fill="#d8d04e"/>
<circle cx="1049" cy="540" r="5.500" fill="#a98a62"/>
<path d="M1026,572 L1045,565 L1060,585 L1085,572 V590 H1030 Z" fill="#6b1a10"/>
<path d="M985,590 L1020,578 L1050,585 L1085,592 V620 H985 Z" fill="#1f3a1c"/>
<circle cx="1030" cy="595" r="12" fill="#34562e"/><circle cx="1010" cy="602" r="8" fill="#2c4a28"/><circle cx="1056" cy="604" r="9" fill="#2c4a28"/>
</g>
</g>

<!-- posts bar -->
<rect x="639" y="627" width="437" height="27" fill="#dee5eb"/>
<text x="648.500" y="645" class="b" style="fill:#45668e" textLength="83.500">5248 записей</text>
<text x="942" y="645" class="b" style="fill:#a0b3c8" textLength="125">к записям Вероники</text>
<rect x="639" y="654" width="437" height="43" fill="#f0f0f0"/>
<rect x="648.500" y="663.500" width="416" height="23" fill="#fff" stroke="#c0cad8"/>
<text x="654.500" y="679" style="fill:#777" textLength="102">Что у Вас нового?</text>

<!-- post -->
<g clip-path="url(#cAv)">
<rect x="639" y="708" width="55" height="56" fill="#e8e8e8"/>
<path d="M645,708 H694 V764 H660 L639,745 L639,724 Z" fill="#090909"/>
<path d="M639,735 C645,722 665,725 672,745 C678,755 680,760 680,764 H660 C650,755 640,745 639,735 Z" fill="#8a8a8a"/>
<path d="M639,745 L660,764 H639 Z" fill="#cfcfcf"/>
</g>
<text x="705.500" y="721" class="b" style="fill:#2b5a85" textLength="114.500">Вероника Кузьмич</text>
<g clip-path="url(#cShare)">
<rect x="705" y="732" width="82" height="32" fill="#d8b048"/>
<rect x="705" y="737" width="82" height="12" fill="#c23028"/>
<rect x="720" y="739" width="22" height="12" fill="#1c1c1c"/>
<circle cx="771" cy="745" r="7" fill="#c58f66"/>
<rect x="705" y="751" width="82" height="13" fill="#e04030"/>
<text x="705" y="765" style="fill:#fff;font-size:14px;font-weight:bold" textLength="56" lengthAdjust="spacingAndGlyphs">1Share.by</text>
</g>
<text x="798.500" y="741" class="b" style="fill:#2b587a" textLength="202.500">1Share.by - FTP файлообменник</text>
<text x="798.500" y="755" class="b" style="fill:#2b587a" textLength="57">Беларуси</text>

<!-- side widget -->
<rect x="1264" y="720" width="55" height="44" fill="#eaeef3"/>
<text x="1276" y="747" class="b" style="fill:#7f9bb8" textLength="14">20</text>
<circle cx="1300" cy="742" r="4" fill="#8ba6c2"/><path d="M1294,748 q1,-3 4,-3 h4 q3,0 4,3 z" fill="#8ba6c2"/>
</svg>
</body></html>
